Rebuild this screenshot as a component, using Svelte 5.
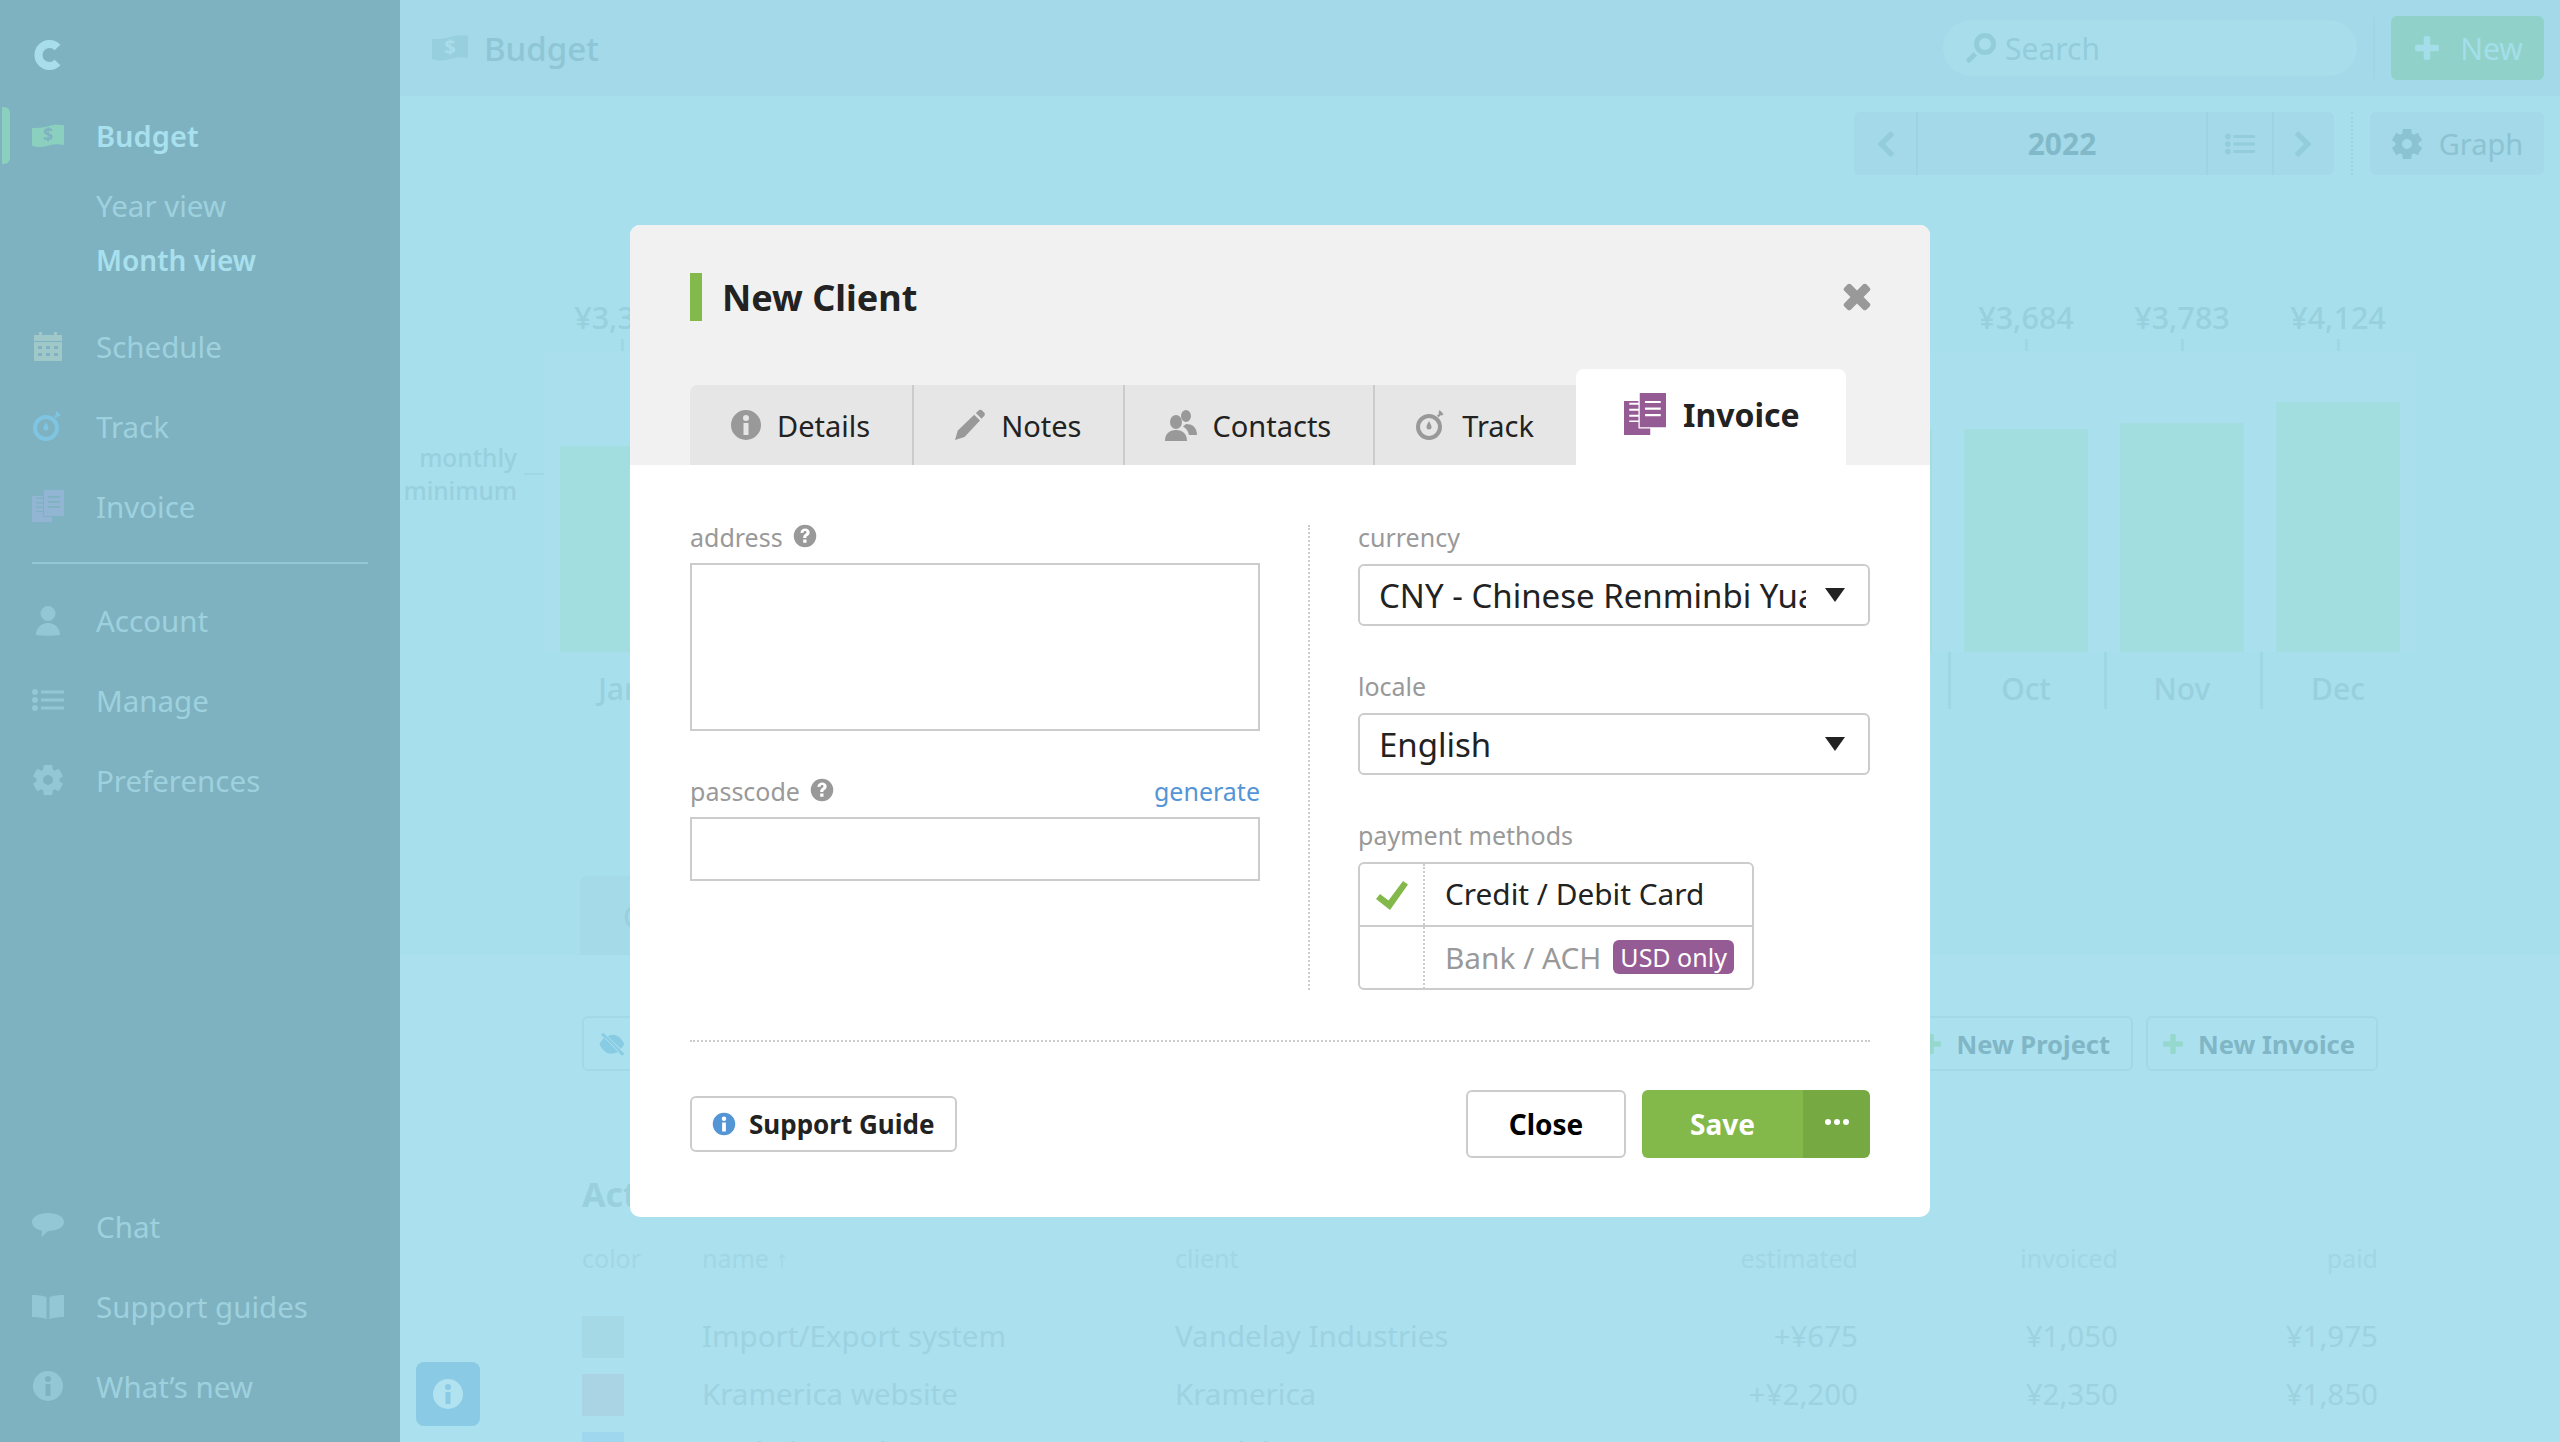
<script>
  const gear = (() => {
    // six toothed gear with a round hole
    let d = '';
    for (let i = 0; i < 6; i++) {
      const a = (i * Math.PI) / 3 - Math.PI / 2;
      const p = (r, o) => `${(16 + r * Math.cos(a + o)).toFixed(2)} ${(16 + r * Math.sin(a + o)).toFixed(2)}`;
      d += `${i ? 'L' : 'M'}${p(11.5, -0.42)}L${p(15.5, -0.28)}L${p(15.5, 0.28)}L${p(11.5, 0.42)}`;
    }
    return d + 'zM16 11a5 5 0 1 0 0 10a5 5 0 1 0 0-10z';
  })();

  const icons = {
    gear,
    info: 'M16 1a15 15 0 1 0 0 30a15 15 0 1 0 0-30zM16 6a3 3 0 1 1 0 6a3 3 0 1 1 0-6zM13.5 14h5v12h-5z',
    help: 'M16 1a15 15 0 1 0 0 30a15 15 0 1 0 0-30zM10 12c0-4 3-6 6.2-6c3.6 0 6 2.3 6 5.2c0 3-2.2 4-3.5 5c-.7.6-.9 1-.9 2.3h-4.2c0-2.6.6-3.7 2.2-5c1.2-1 2.2-1.5 2.2-2.6c0-1-.8-1.7-1.9-1.7c-1.3 0-2 .9-2 2.3zM13.6 20.5h4.4v4.5h-4.4z',
    pencil: 'M24.5 1.5c1-1 2.6-1 3.6 0l2 2c1 1 1 2.6 0 3.6l-2.6 2.6-5.6-5.6zM20.2 5.8l5.8 5.8L10.5 28 1 31l2.8-9.4z',
    people: 'M21 1a5 6 0 1 1 0 12a5 6 0 1 1 0-12zM11 6a6 7 0 1 1 0 14a6 7 0 1 1 0-14zM0 32c0-7 4-11 11-11s11 4 11 11zM21 15c6 0 11 3 11 11h-8c-.8-4-3-7-6-8.500c1-1 2-1.800 3-2.500z',
    watch: 'M14 5a13 13 0 1 0 0 26a13 13 0 1 0 0-26zM14 9a9 9 0 1 1 0 18a9 9 0 1 1 0-18zM14 12c1.500 3 2.500 4.500 2.500 6a2.500 2.500 0 1 1-5 0c0-1.500 1-3 2.500-6zM24.500 1l4 4-1.800 1.800-.8-.8-2.200 2.300-1.700-1.700 2.300-2.200-.8-.8z',
    invoice: 'M0 6h11v1.500H4v1.500h7v3H4v1.500h7v3H4v1.500h7v3H4V22h7v5h9v5H0zM12 0h20v26H12zM16 6v1.700h12V6zM16 11v1.700h12V11zM16 16v1.700h12V16z',
    calendar: 'M2 5h5V2h3v3h12V2h3v3h5v26H2zM2 11v1h28v-1zM6 16v3h4v-3zM14 16v3h4v-3zM22 16v3h4v-3zM6 23v3h4v-3zM14 23v3h4v-3zM22 23v3h4v-3z',
    person: 'M16 2a7.500 7.500 0 1 0 0 15a7.500 7.500 0 1 0 0-15zM4 31c0-7 5-12 12-12s12 5 12 12c-8 1-16 1-24 0z',
    list: 'M3 5a3 3 0 1 1 0 6a3 3 0 1 1 0-6zM3 13a3 3 0 1 1 0 6a3 3 0 1 1 0-6zM3 21a3 3 0 1 1 0 6a3 3 0 1 1 0-6zM9 6.500h23v3H9zM9 14.500h23v3H9zM9 22.500h23v3H9z',
    chat: 'M16 3c9 0 16 3.500 16 9s-7 9-16 9l-6.500 6 .5-6.500C4 19.500 0 16.500 0 12 0 6.500 7 3 16 3z',
    book: 'M0 5c5 0 10 .5 14.500 2v22C10 27.500 5 27 0 27zM32 5c-5 0-10 .5-14.500 2v22c4.500-1.500 9.500-2 14.500-2z',
    search: 'M20 1a11 11 0 1 0 0 22a11 11 0 1 0 0-22zM20 6a6 6 0 1 1 0 12a6 6 0 1 1 0-12zM8.500 20l3.500 3.500-6.500 6.500a2.400 2.400 0 0 1-3.500-3.500z',
    plus: 'M12 3a1.500 1.500 0 0 1 1.500-1.500h5A1.500 1.500 0 0 1 20 3v9h9a1.500 1.500 0 0 1 1.500 1.500v5A1.500 1.500 0 0 1 29 20h-9v9a1.500 1.500 0 0 1-1.500 1.500h-5A1.500 1.500 0 0 1 12 29v-9H3a1.500 1.500 0 0 1-1.500-1.500v-5A1.500 1.500 0 0 1 3 12h9z',
    close: 'M6 2.500c1-1 2.400-1 3.400 0L16 9l6.600-6.500c1-1 2.400-1 3.400 0l3.500 3.500c1 1 1 2.400 0 3.400L23 16l6.500 6.600c1 1 1 2.400 0 3.400L26 29.500c-1 1-2.400 1-3.400 0L16 23l-6.600 6.500c-1 1-2.400 1-3.400 0L2.500 26c-1-1-1-2.400 0-3.400L9 16 2.500 9.400c-1-1-1-2.400 0-3.400z',
    check: 'M27 2l5 3.500L14 31 0 20l4-5 8.500 6.500z',
    left: 'M22 2l4 4-10 10 10 10-4 4L8 16z',
    right: 'M10 2l-4 4 10 10L6 26l4 4 14-14z',
    eye: 'M6 3l24 24-2.500 2.500L3.500 5.500zM2 15c2-3 4-5 6-6.500l16 16C21 26 18 27 15 27 9 27 5 22 2 17zM30 16c-1 2-2.500 4-4 5.500L11 7c2-1 4-1.500 6-1.500 6 0 10.500 5 13 10.500z'
  };

  const values = [3399, 3450, 3520, 3480, 3610, 3570, 3640, 3590, 3660, 3684, 3783, 4124];
  const months = ['Jan', 'Feb', 'Mar', 'Apr', 'May', 'Jun', 'Jul', 'Aug', 'Sep', 'Oct', 'Nov', 'Dec'];
  const yen = (n) => '¥' + n.toLocaleString('en-US');

  const rows = [
    { swatch: '#a5d9e6', name: 'Import/Export system', client: 'Vandelay Industries', est: '+¥675', inv: '¥1,050', paid: '¥1,975' },
    { swatch: '#aad4e4', name: 'Kramerica website', client: 'Kramerica', est: '+¥2,200', inv: '¥2,350', paid: '¥1,850' },
    { swatch: '#9fd7ee', name: 'Analytics tool', client: 'Vandelay', est: '+¥1,200', inv: '¥3,000', paid: '¥1,250' }
  ];

  const tabs = [
    { label: 'Details', icon: 'info' },
    { label: 'Notes', icon: 'pencil' },
    { label: 'Contacts', icon: 'people' },
    { label: 'Track', icon: 'watch' }
  ];
</script>

{#snippet icon(name, cls = '')}
  <svg class="icon {cls}" viewBox="0 0 32 32" aria-hidden="true"><path fill-rule="evenodd" d={icons[name]} /></svg>
{/snippet}

{#snippet money(cls)}
  <svg class="icon {cls}" viewBox="0 0 36 26" aria-hidden="true">
    <path d="M0 4c6 0 11 0 18-2s12-2 18-1v22c-6-1-11-1-18 1S6 26 0 24z" />
    <text x="18" y="19" text-anchor="middle" class="dollar">$</text>
  </svg>
{/snippet}

<div class="page">
  <aside class="sidebar">
    <div class="logo">
      <svg viewBox="3 0 27 30" aria-hidden="true"><path d="M26 7.500A11 11 0 1 0 26 22.500" fill="none" stroke="#a8deec" stroke-width="8" /></svg>
    </div>

    <a class="item active">{@render money('green')}<span>Budget</span></a>
    <a class="sub top">Year view</a>
    <a class="sub on">Month view</a>

    <a class="item first">{@render icon('calendar', 'sage')}<span>Schedule</span></a>
    <a class="item">{@render icon('watch', 'sky')}<span>Track</span></a>
    <a class="item">{@render icon('invoice', 'periwinkle')}<span>Invoice</span></a>

    <hr />

    <a class="item">{@render icon('person')}<span>Account</span></a>
    <a class="item">{@render icon('list')}<span>Manage</span></a>
    <a class="item">{@render icon('gear')}<span>Preferences</span></a>

    <div class="spacer"></div>

    <a class="item">{@render icon('chat')}<span>Chat</span></a>
    <a class="item">{@render icon('book')}<span>Support guides</span></a>
    <a class="item">{@render icon('info')}<span>What’s new</span></a>
  </aside>

  <main class="main">
    <header class="topbar">
      {@render money('head-icon')}
      <h1>Budget</h1>
      <div class="grow"></div>
      <div class="search">{@render icon('search')}<span>Search</span></div>
      <div class="top-sep"></div>
      <button class="new">{@render icon('plus')}<span>New</span></button>
    </header>

    <div class="toolbar">
      <div class="year-nav">
        <div class="cell arrow">{@render icon('left')}</div>
        <div class="cell year">2022</div>
        <div class="cell listing">{@render icon('list')}</div>
        <div class="cell arrow">{@render icon('right')}</div>
      </div>
      <div class="dotted"></div>
      <button class="graph">{@render icon('gear')}<span>Graph</span></button>
    </div>

    <section class="chart">
      <div class="minimum"><span>monthly<br />minimum</span><i></i></div>
      {#each months as month, i}
        <div class="col">
          <div class="value">{yen(values[i])}</div>
          <div class="plot"><div class="bar" style="height: {values[i] / 16.5}px"></div></div>
          <div class="month">{month}</div>
        </div>
      {/each}
    </section>

    <div class="strip"><div class="strip-tab">Clients</div></div>

    <section class="lower">
      <div class="actions">
        <button class="ghost hide">{@render icon('eye')}</button>
        <div class="grow"></div>
        <button class="ghost">{@render icon('plus')}<span>New Project</span></button>
        <button class="ghost">{@render icon('plus')}<span>New Invoice</span></button>
      </div>

      <h2>Active projects</h2>

      <div class="table head">
        <span>color</span><span>name ↑</span><span>client</span>
        <span class="num">estimated</span><span class="num">invoiced</span><span class="num">paid</span>
      </div>
      {#each rows as row}
        <div class="table row">
          <span class="swatch" style="background: {row.swatch}"></span>
          <span>{row.name}</span><span>{row.client}</span>
          <span class="num">{row.est}</span><span class="num">{row.inv}</span><span class="num">{row.paid}</span>
        </div>
      {/each}
    </section>

    <button class="whats-new">{@render icon('info')}</button>
  </main>

  <div class="overlay">
    <div class="modal">
      <div class="modal-head">
        <div class="title-row">
          <h3>New Client</h3>
          <button class="x">{@render icon('close')}</button>
        </div>
        <nav class="tabs">
          {#each tabs as tab}
            <button class="tab">{@render icon(tab.icon)}<span>{tab.label}</span></button>
          {/each}
          <button class="tab current">{@render icon('invoice')}<span>Invoice</span></button>
        </nav>
      </div>

      <div class="modal-body">
        <div class="form-col">
          <label class="lbl" for="address">address {@render icon('help')}</label>
          <textarea id="address"></textarea>
          <div class="lbl gap">
            <label for="passcode">passcode</label> {@render icon('help')}
            <a class="generate">generate</a>
          </div>
          <input id="passcode" type="text" />
        </div>

        <div class="form-col right">
          <label class="lbl" for="currency">currency</label>
          <div class="select">
            <select id="currency"><option>CNY - Chinese Renminbi Yuan</option></select>
          </div>
          <label class="lbl gap" for="locale">locale</label>
          <div class="select">
            <select id="locale"><option>English</option></select>
          </div>
          <div class="lbl gap">payment methods</div>
          <div class="methods">
            <div class="method">
              <div class="tick">{@render icon('check')}</div>
              <div class="method-name">Credit / Debit Card</div>
            </div>
            <div class="method off">
              <div class="tick"></div>
              <div class="method-name">Bank / ACH <span class="badge">USD only</span></div>
            </div>
          </div>
        </div>
      </div>

      <div class="modal-foot">
        <button class="guide">{@render icon('info')}<span>Support Guide</span></button>
        <div class="grow"></div>
        <button class="close">Close</button>
        <div class="save">
          <button class="save-main">Save</button>
          <button class="save-more" aria-label="More"><i></i><i></i><i></i></button>
        </div>
      </div>
    </div>
  </div>
</div>

<style>
  :global(body) {
    margin: 0;
    background: #a7dfec;
    font-family: "Noto Sans", "Open Sans", Arial, sans-serif;
  }

  .page {
    display: flex;
    height: 1442px;
    overflow: hidden;
    position: relative;
  }

  .icon {
    width: 32px;
    height: 32px;
    flex: none;
    fill: currentColor;
  }

  .grow {
    flex: 1;
  }

  button {
    font-family: inherit;
    border: 0;
    background: none;
    padding: 0;
  }

  /* sidebar */
  .sidebar {
    width: 400px;
    flex: none;
    height: 1442px;
    box-sizing: border-box;
    background: #7fb2c1;
    display: flex;
    flex-direction: column;
    padding-bottom: 16px;
    color: #9ed1de;
    font-size: 29.5px;
  }

  .logo {
    height: 96px;
    padding-left: 34px;
    display: flex;
    align-items: center;
    padding-top: 14px;
    box-sizing: border-box;
  }

  .logo svg {
    width: 28px;
    height: 30px;
  }

  .item {
    height: 80px;
    display: flex;
    align-items: center;
    gap: 32px;
    padding-left: 32px;
    position: relative;
    color: #9ed1de;
  }

  .item .icon {
    color: #94c7d6;
  }

  .item.active {
    font-weight: 600;
    font-size: 29px;
    color: #a8e0ee;
  }

  .item.active span {
    margin-top: -2px;
  }

  .item.active::before {
    content: "";
    position: absolute;
    left: 2px;
    top: 11px;
    width: 8px;
    height: 57px;
    background: #8bd0bf;
    border-radius: 0 6px 6px 0;
  }

  .item.first {
    margin-top: 19px;
  }

  .icon.green {
    color: #8bd0bf;
    height: 26px;
  }

  .dollar {
    font-size: 20px;
    font-weight: 700;
    fill: #7fb2c1;
  }

  .icon.sage {
    color: #a0c8c8;
  }

  .icon.sky {
    color: #7fc4e0;
  }

  .icon.periwinkle {
    color: #92b5d4;
  }

  .sub {
    height: 54px;
    line-height: 54px;
    padding-left: 96px;
    color: #9ed1de;
  }

  .sub.top {
    margin-top: 3px;
  }

  .sub.on {
    font-weight: 600;
    font-size: 28px;
    color: #a8e0ee;
  }

  .sidebar hr {
    border: 0;
    height: 2px;
    background: #94c7d6;
    margin: 16px 32px 16px;
  }

  .spacer {
    flex: 1;
  }

  /* page behind the dialog */
  .main {
    flex: 1;
    min-width: 0;
    position: relative;
    color: #8cc3d2;
  }

  .topbar {
    height: 96px;
    background: #a3d9e8;
    display: flex;
    align-items: center;
    padding: 0 16px 0 32px;
    box-sizing: border-box;
  }

  .icon.head-icon {
    width: 36px;
    height: 26px;
    color: #98cfdf;
  }

  .head-icon .dollar {
    fill: #a8deec;
  }

  .topbar h1 {
    margin: 0 0 0 16px;
    font-size: 33px;
    font-weight: 500;
    color: #8ec6d6;
  }

  .search {
    width: 414px;
    height: 56px;
    background: #a8deec;
    border-radius: 28px;
    display: flex;
    align-items: center;
    gap: 8px;
    padding-left: 22px;
    box-sizing: border-box;
    font-size: 30px;
    color: #93ccdb;
  }

  .top-sep {
    width: 2px;
    height: 62px;
    background: #9fd5e4;
    margin: 0 16px;
  }

  .new {
    width: 153px;
    height: 64px;
    background: #90d2c9;
    border-radius: 6px;
    display: flex;
    align-items: center;
    justify-content: center;
    gap: 20px;
    font-size: 30px;
    color: #a4deea;
    padding-left: 2px;
  }

  .new .icon {
    width: 26px;
    height: 26px;
  }

  .toolbar {
    margin-top: 16px;
    height: 63px;
    display: flex;
    justify-content: flex-end;
    padding-right: 16px;
  }

  .year-nav {
    display: flex;
    background: #a3d9e8;
    border-radius: 6px;
    height: 63px;
  }

  .cell {
    display: flex;
    align-items: center;
    justify-content: center;
    border-left: 2px solid #9dd3e2;
    box-sizing: border-box;
    color: #93ccdb;
  }

  .cell:first-child {
    border-left: 0;
  }

  .cell .icon {
    width: 30px;
    height: 30px;
  }

  .arrow {
    width: 62px;
  }

  .year {
    width: 290px;
    font-size: 30px;
    font-weight: 700;
    color: #82b9c8;
  }

  .listing {
    width: 66px;
  }

  .dotted {
    border-left: 2px dotted #9dd3e2;
    margin: 0 17px;
  }

  .graph {
    width: 174px;
    display: flex;
    align-items: center;
    justify-content: center;
    gap: 16px;
    background: #a3d9e8;
    border-radius: 6px;
    font-size: 29px;
    color: #8cc3d2;
  }

  .chart {
    margin: 124px 0 0 144px;
    display: flex;
    position: relative;
    width: 1872px;
  }

  .col {
    width: 156px;
  }

  .value {
    height: 54px;
    line-height: 36px;
    text-align: center;
    font-size: 30.5px;
    font-weight: 500;
    color: #98d0de;
    position: relative;
  }

  .value::after {
    content: "";
    position: absolute;
    left: 77px;
    top: 40px;
    width: 3px;
    height: 12px;
    background: #a0d7e5;
  }

  .plot {
    height: 299px;
    background: #aadfee;
    display: flex;
    align-items: flex-end;
    padding: 0 16px;
  }

  .bar {
    width: 124px;
    background: #a2dde0;
  }

  .month {
    height: 57px;
    line-height: 74px;
    border-left: 3px solid #a0d7e5;
    box-sizing: border-box;
    padding-right: 3px;
    text-align: center;
    font-size: 30px;
    font-weight: 500;
    color: #98d0de;
  }

  .col:nth-child(2) .month {
    border-left: 0;
  }

  .minimum {
    position: absolute;
    right: 100%;
    top: 142px;
    display: flex;
    align-items: center;
    gap: 7px;
    text-align: right;
    font-size: 24.5px;
    font-weight: 500;
    line-height: 33px;
    color: #98d0de;
    white-space: nowrap;
  }

  .minimum i {
    width: 20px;
    height: 2px;
    background: #a0d7e5;
  }

  .strip {
    margin-top: 167px;
    height: 79px;
    padding-left: 180px;
  }

  .strip-tab {
    width: 300px;
    height: 79px;
    box-sizing: border-box;
    padding: 20px 0 0 43px;
    background: #a5dbe9;
    border-radius: 6px 6px 0 0;
    font-size: 30px;
    color: #98d0de;
  }

  .lower {
    background: #abe0ee;
    height: 487px;
    box-sizing: border-box;
    padding: 61px 182px 0;
  }

  .actions {
    display: flex;
    gap: 13px;
    height: 55px;
  }

  .ghost {
    display: flex;
    align-items: center;
    gap: 14px;
    padding: 0 21px 0 14px;
    border: 2px solid #a3d8e6;
    border-radius: 6px;
    font-size: 25.5px;
    font-weight: 700;
    color: #80b6c5;
    white-space: nowrap;
  }

  .ghost .icon {
    width: 22px;
    height: 22px;
    color: #96d8cd;
  }

  .ghost.hide .icon {
    width: 28px;
    height: 28px;
    color: #88cce4;
  }

  .lower h2 {
    margin: 100px 0 17px;
    height: 50px;
    line-height: 46px;
    font-size: 34px;
    font-weight: 700;
    color: #99d0de;
  }

  .table {
    display: grid;
    grid-template-columns: 120px 473px 400px 283px 260px 260px;
    align-items: center;
  }

  .head {
    height: 40px;
    margin-bottom: 30px;
    font-size: 25px;
    color: #a1d7e5;
  }

  .row {
    height: 58px;
    font-size: 29.5px;
    color: #9dd3e1;
  }

  .row span {
    padding-bottom: 3px;
  }

  .num {
    text-align: right;
  }

  .row .swatch {
    width: 42px;
    height: 42px;
    padding: 0;
  }

  .whats-new {
    position: absolute;
    left: 16px;
    top: 1362px;
    width: 64px;
    height: 64px;
    border-radius: 8px;
    background: #8acae4;
    color: #b1e2ef;
    display: flex;
    align-items: center;
    justify-content: center;
  }

  /* dialog */
  .overlay {
    position: absolute;
    inset: 0;
    display: flex;
    align-items: center;
    justify-content: center;
  }

  .modal {
    width: 1300px;
    height: 992px;
    background: #fff;
    border-radius: 10px;
    overflow: hidden;
    color: #222;
    display: flex;
    flex-direction: column;
  }

  .modal-head {
    height: 240px;
    background: #f1f1f1;
    padding: 0 0 0 60px;
    box-sizing: border-box;
    display: flex;
    flex-direction: column;
  }

  .title-row {
    display: flex;
    align-items: center;
    justify-content: space-between;
    padding: 48px 56px 0 0;
  }

  h3 {
    margin: 0;
    height: 48px;
    line-height: 50px;
    border-left: 12px solid #82b94a;
    padding-left: 20px;
    font-size: 36px;
    font-weight: 700;
    color: #222;
  }

  .x {
    color: #999;
    display: flex;
    margin-right: 2px;
  }

  .x .icon {
    width: 30px;
    height: 30px;
  }

  .tabs {
    margin-top: auto;
    display: flex;
    align-items: flex-end;
  }

  .tab {
    height: 80px;
    background: #e6e6e6;
    border-right: 2px solid #ccc;
    display: flex;
    align-items: center;
    gap: 15px;
    padding: 0 42px 0 40px;
    box-sizing: border-box;
    font-size: 29px;
    color: #222;
  }

  .tab:first-child {
    border-radius: 8px 0 0 0;
  }

  .tab .icon {
    color: #999;
  }

  .tab:nth-child(4) {
    border-right: 0;
  }

  .tab.current {
    height: 96px;
    background: #fff;
    border-right: 0;
    border-radius: 8px 8px 0 0;
    padding: 0 46px 6px 48px;
    gap: 17px;
    font-size: 32px;
    font-weight: 700;
  }

  .tab.current .icon {
    width: 42px;
    height: 42px;
    color: #955b94;
  }

  .modal-body {
    height: 575px;
    padding: 60px 60px 0 60px;
    box-sizing: border-box;
    display: flex;
    align-items: flex-start;
    gap: 48px;
  }

  .form-col {
    width: 570px;
    display: flex;
    flex-direction: column;
  }

  .form-col.right {
    width: 512px;
    height: 465px;
    border-left: 2px dotted #ccc;
    padding-left: 48px;
    box-sizing: content-box;
  }

  .lbl {
    height: 38px;
    flex: none;
    display: flex;
    align-items: flex-start;
    gap: 10px;
    font-size: 25px;
    line-height: 24px;
    color: #999;
  }

  .lbl .icon {
    width: 24px;
    height: 24px;
    margin-top: -1px;
  }

  .lbl.gap {
    margin-top: 48px;
  }

  .generate {
    margin-left: auto;
    color: #5495d6;
  }

  textarea,
  input {
    display: block;
    width: 570px;
    box-sizing: border-box;
    border: 2px solid #ccc;
    background: #fff;
    margin: 0;
    outline: 0;
    font-family: inherit;
    resize: none;
  }

  textarea {
    height: 168px;
  }

  input {
    height: 64px;
  }

  .select {
    height: 62px;
    position: relative;
    flex: none;
    margin-top: 1px;
  }

  .select::after {
    content: "";
    position: absolute;
    right: 25px;
    top: 24px;
    border: 10px solid transparent;
    border-top: 14px solid #222;
    border-bottom: 0;
  }

  select {
    appearance: none;
    width: 100%;
    height: 100%;
    box-sizing: border-box;
    border: 2px solid #ccc;
    border-radius: 6px;
    background: #fff;
    font-family: inherit;
    font-size: 33px;
    color: #222;
    padding: 0 62px 0 19px;
  }

  .methods {
    width: 396px;
    height: 128px;
    border: 2px solid #ccc;
    border-radius: 6px;
    box-sizing: border-box;
    flex: none;
    margin-top: 1px;
  }

  .method {
    height: 61px;
    display: flex;
    align-items: center;
  }

  .method + .method {
    height: 62px;
    border-top: 2px solid #ccc;
  }

  .tick {
    width: 65px;
    height: 100%;
    box-sizing: border-box;
    border-right: 2px dotted #ccc;
    display: flex;
    align-items: center;
    justify-content: center;
    color: #82b94a;
    flex: none;
  }

  .method-name {
    margin-left: 20px;
    padding-bottom: 2px;
    font-size: 29.8px;
    display: flex;
    align-items: center;
    gap: 12px;
  }

  .off .method-name {
    color: #999;
  }

  .badge {
    background: #955b94;
    color: #fff;
    font-size: 25px;
    line-height: 34px;
    padding: 0 7px;
    border-radius: 6px;
  }

  .modal-foot {
    margin: 0 60px;
    flex: 1;
    border-top: 2px dotted #ccc;
    display: flex;
    align-items: center;
    padding-bottom: 12px;
    box-sizing: border-box;
  }

  .guide {
    width: 267px;
    height: 56px;
    border: 2px solid #ccc;
    border-radius: 6px;
    display: flex;
    align-items: center;
    gap: 13px;
    padding-left: 20px;
    font-size: 26px;
    font-weight: 700;
    color: #222;
  }

  .guide .icon {
    width: 24px;
    height: 24px;
    color: #5495d6;
  }

  .close {
    width: 160px;
    height: 68px;
    border: 2px solid #ccc;
    border-radius: 6px;
    margin-right: 16px;
    font-size: 28px;
    font-weight: 700;
    color: #000;
  }

  .save {
    display: flex;
    height: 68px;
    width: 228px;
    border-radius: 6px;
    overflow: hidden;
  }

  .save-main {
    flex: 1;
    background: #82b94a;
    color: #fff;
    font-size: 28px;
    font-weight: 700;
  }

  .save-more {
    width: 67px;
    background: #76a941;
    display: flex;
    align-items: center;
    justify-content: center;
    gap: 3px;
    padding-bottom: 4px;
  }

  .save-more i {
    width: 6px;
    height: 6px;
    border-radius: 50%;
    background: #fff;
  }
</style>
